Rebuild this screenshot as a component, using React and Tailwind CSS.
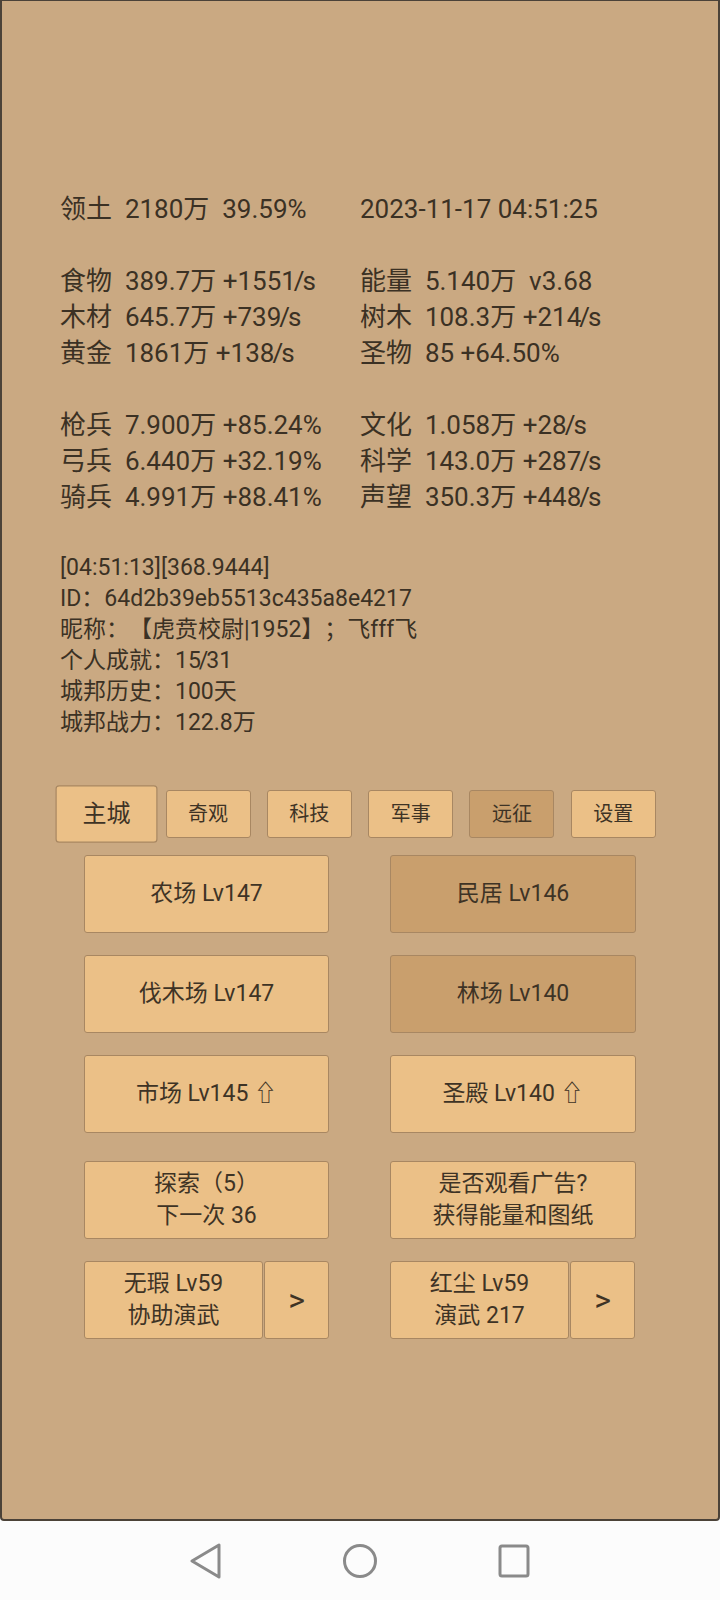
import React from 'react';

const stats = [
    ['领土  2180万  39.59%', '2023-11-17 04:51:25'],
    null,
    ['食物  389.7万 +1551/s', '能量  5.140万  v3.68'],
    ['木材  645.7万 +739/s', '树木  108.3万 +214/s'],
    ['黄金  1861万 +138/s', '圣物  85 +64.50%'],
    null,
    ['枪兵  7.900万 +85.24%', '文化  1.058万 +28/s'],
    ['弓兵  6.440万 +32.19%', '科学  143.0万 +287/s'],
    ['骑兵  4.991万 +88.41%', '声望  350.3万 +448/s'],
];

const info = [
    '[04:51:13][368.9444]',
    'ID：64d2b39eb5513c435a8e4217',
    '昵称：【虎贲校尉|1952】；飞fff飞',
    '个人成就：15/31',
    '城邦历史：100天',
    '城邦战力：122.8万',
];

const tabs = ['主城', '奇观', '科技', '军事', '远征', '设置'];

// Roboto's slash runs wide next to the game font, pull it in a bit
function Txt({ text, pull }) {
    const parts = text.split('/');
    return parts.map((p, i) => (
        <React.Fragment key={i}>
            {p}
            {i < parts.length - 1 && <span className={pull}>/</span>}
        </React.Fragment>
    ));
}

function Btn({ dark, className = '', children }) {
    return (
        <button
            className={
                'flex flex-col items-center justify-center border border-[#a88762] rounded-[3px] text-[#3e3325] ' +
                (dark ? 'bg-[#c99f6d] ' : 'bg-[#ebc087] ') +
                className
            }
        >
            {children}
        </button>
    );
}

export default function App() {
    return (
        <div className="w-[720px] h-[1600px] flex flex-col bg-[#fcfcfc] font-[Roboto,'Noto_Sans_CJK_SC',sans-serif] text-[#3b3124] [text-spacing-trim:space-all]">
            <div className="h-[1521px] shrink-0 bg-[#caa982] border-x-2 border-t border-b-2 border-[#4b4238] rounded-b-[4px] pt-[190px]">
                {/* resources */}
                <div className="grid grid-cols-[300px_1fr] pl-[58px] text-[26px] leading-[36px]">
                    {stats.map((row, i) =>
                        row ? (
                            <React.Fragment key={i}>
                                <div className="whitespace-pre">
                                    <Txt text={row[0]} pull="mx-[-2px]" />
                                </div>
                                <div className="whitespace-pre">
                                    <Txt text={row[1]} pull="mx-[-2px]" />
                                </div>
                            </React.Fragment>
                        ) : (
                            <div key={i} className="col-span-2 h-[36px]" />
                        )
                    )}
                </div>

                {/* player info */}
                <div className="mt-[37px] pl-[58px] text-[23px] leading-[31px]">
                    {info.map((t) => (
                        <div key={t} className="whitespace-pre">
                            <Txt text={t} pull="mx-[-2px]" />
                        </div>
                    ))}
                </div>

                {/* tabs */}
                <div className="mt-[52px] flex justify-center">
                    {tabs.map((t, i) => (
                        <div key={t} className="w-[101.3px] flex justify-center">
                            <Btn
                                dark={t === '远征'}
                                className={'w-[85px] h-[48px] text-[20px] ' + (i === 0 ? 'scale-[1.2]' : '')}
                            >
                                {t}
                            </Btn>
                        </div>
                    ))}
                </div>

                {/* buildings */}
                <div className="mt-[17px] grid grid-cols-[245px_246px] justify-center gap-x-[61px] text-[23px] leading-[32px]">
                    <Btn className="h-[78px]">农场 Lv147</Btn>
                    <Btn dark className="h-[78px]">民居 Lv146</Btn>
                    <Btn className="h-[78px] mt-[22px]">伐木场 Lv147</Btn>
                    <Btn dark className="h-[78px] mt-[22px]">林场 Lv140</Btn>
                    <Btn className="h-[78px] mt-[22px]">市场 Lv145 ⇧</Btn>
                    <Btn className="h-[78px] mt-[22px]">圣殿 Lv140 ⇧</Btn>
                    <Btn className="h-[78px] mt-[28px]">
                        <span>探索（5）</span>
                        <span>下一次 36</span>
                    </Btn>
                    <Btn className="h-[78px] mt-[28px]">
                        <span>是否观看广告?</span>
                        <span>获得能量和图纸</span>
                    </Btn>
                    <div className="flex gap-[1px] mt-[22px]">
                        <Btn className="h-[78px] w-[179px]">
                            <span>无瑕 Lv59</span>
                            <span>协助演武</span>
                        </Btn>
                        <Btn className="h-[78px] w-[65px] text-[32px]">&gt;</Btn>
                    </div>
                    <div className="flex gap-[1px] mt-[22px]">
                        <Btn className="h-[78px] w-[179px]">
                            <span>红尘 Lv59</span>
                            <span>演武 217</span>
                        </Btn>
                        <Btn className="h-[78px] w-[65px] text-[32px]">&gt;</Btn>
                    </div>
                </div>
            </div>

            {/* system nav bar */}
            <div className="flex-1 flex items-center justify-center gap-[118px]">
                <svg width="36" height="36" viewBox="0 0 36 36">
                    <polygon
                        points="31,2 31,34 4,18"
                        fill="none"
                        stroke="#8a8a8a"
                        strokeWidth="3"
                        strokeLinejoin="round"
                    />
                </svg>
                <svg width="36" height="36" viewBox="0 0 36 36">
                    <circle cx="18" cy="18" r="15.5" fill="none" stroke="#8a8a8a" strokeWidth="3" />
                </svg>
                <svg width="36" height="36" viewBox="0 0 36 36">
                    <rect x="4" y="3" width="28" height="30" rx="2" fill="none" stroke="#8a8a8a" strokeWidth="3" />
                </svg>
            </div>
        </div>
    );
}
